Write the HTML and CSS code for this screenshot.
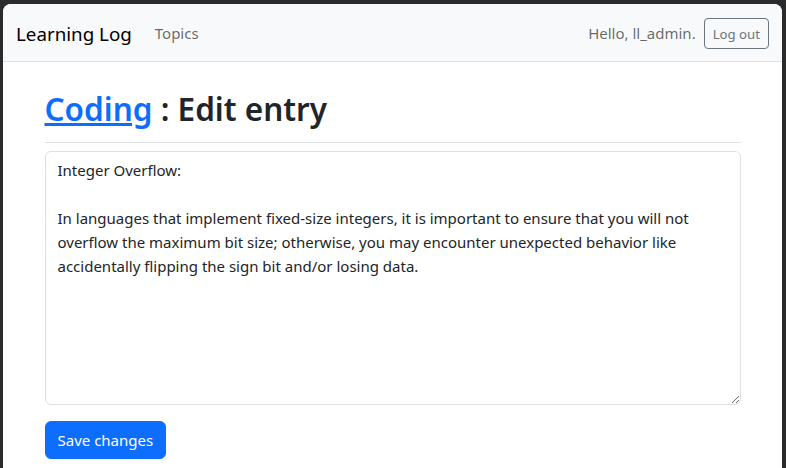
FILE: index.html
```html
<!DOCTYPE html>
<html lang="en">
<head>
<meta charset="utf-8">
<title>Learning Log</title>
<link rel="stylesheet" href="styles.css">
</head>
<body>
<div class="window">
  <nav class="navbar">
    <div class="nav-left">
      <a class="brand" href="#">Learning Log</a>
      <a class="nav-link" href="#">Topics</a>
    </div>
    <div class="nav-right">
      <span class="hello">Hello, ll_admin.</span>
      <button class="btn-logout" type="button">Log out</button>
    </div>
  </nav>
  <main class="container">
    <h2 class="page-title"><a href="#" class="topic-link">Coding</a> : Edit entry</h2>
    <form class="entry-form">
      <textarea class="entry-text" rows="10">Integer Overflow:

In languages that implement fixed-size integers, it is important to ensure that you will not overflow the maximum bit size; otherwise, you may encounter unexpected behavior like accidentally flipping the sign bit and/or losing data.</textarea>
      <button class="btn-save" type="button">Save changes</button>
    </form>
  </main>
</div>
</body>
</html>
```
FILE: styles.css
```css
html, body {
  margin: 0;
  height: 100%;
}
body {
  background: #2b2b2b;
  font-family: "Noto Sans", sans-serif;
  color: #212529;
  overflow: hidden;
}
.window {
  margin: 4px 4px 0 3px;
  height: calc(100% - 4px);
  background: #fff;
  border-radius: 8px 8px 0 0;
  overflow: hidden;
}
.navbar {
  display: flex;
  justify-content: space-between;
  align-items: center;
  height: 58px;
  box-sizing: border-box;
  padding: 0 13px 0 13px;
  background: #f8f9fa;
  border-bottom: 1px solid #dee2e6;
}
.nav-left, .nav-right {
  display: flex;
  align-items: center;
}
.brand {
  font-size: 18.75px;
  color: #000;
  text-decoration: none;
  margin-right: 23px;
  padding-top: 2px;
}
.nav-link {
  font-size: 15px;
  color: rgba(0,0,0,.6);
  text-decoration: none;
}
.hello {
  font-size: 15px;
  color: rgba(0,0,0,.6);
  margin-right: 8px;
}
.btn-logout {
  font-family: inherit;
  font-size: 13.2px;
  color: #6c757d;
  background: transparent;
  border: 1px solid #6c757d;
  border-radius: 4px;
  padding: 4px 8px;
  height: 31px;
  margin-top: 2px;
}
.container {
  max-width: 696px;
  margin: 0 auto;
  padding: 0 12px;
}
.page-title {
  font-size: 31.5px;
  font-weight: 600;
  line-height: 38px;
  margin: 28px 0 0;
  padding-bottom: 14px;
  border-bottom: 1px solid #dee2e6;
}
.topic-link {
  color: #0d6efd;
  text-decoration: underline;
}
.entry-form {
  display: flex;
  flex-direction: column;
  align-items: flex-start;
  padding-top: 8px;
}
.entry-text {
  width: 100%;
  box-sizing: border-box;
  height: 254px;
  font-family: inherit;
  font-size: 15px;
  line-height: 24px;
  color: #212529;
  padding: 6px 12px;
  border: 1px solid #dee2e6;
  border-radius: 6px;
  margin: 0 0 16px;
  resize: vertical;
}
.btn-save {
  font-family: inherit;
  font-size: 15px;
  color: #fff;
  background: #0d6efd;
  border: 1px solid #0d6efd;
  border-radius: 6px;
  padding: 6px 12px;
  height: 38px;
}
```
